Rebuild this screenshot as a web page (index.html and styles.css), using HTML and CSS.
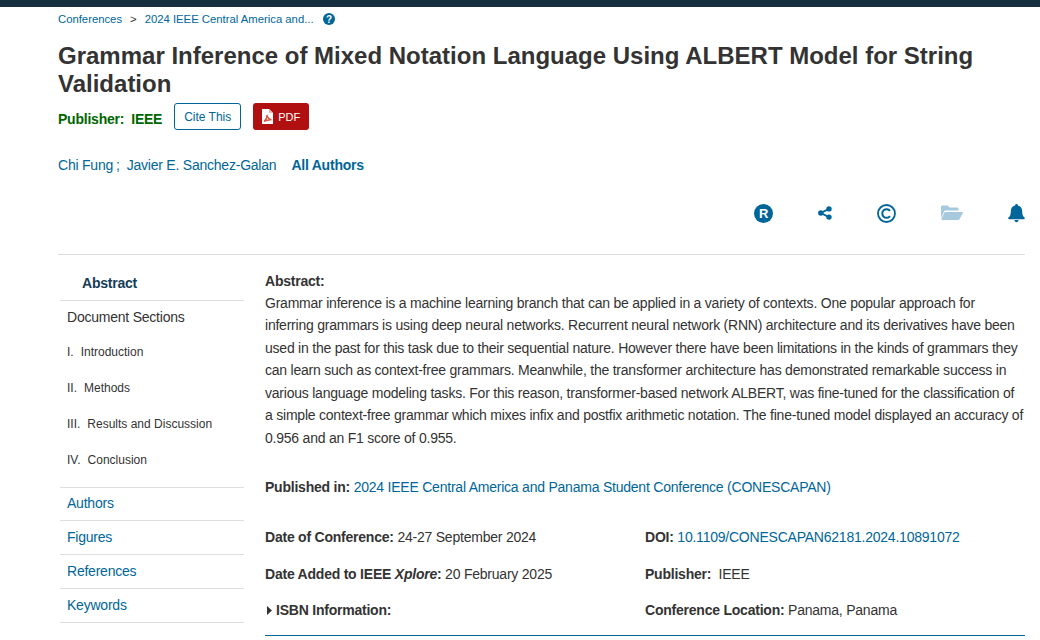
FILE: index.html
```html
<!DOCTYPE html>
<html lang="en">
<head>
<meta charset="utf-8">
<title>Grammar Inference of Mixed Notation Language Using ALBERT Model for String Validation</title>
<link rel="stylesheet" href="styles.css">
</head>
<body>
<div class="topbar"></div>
<main class="page">
  <nav class="crumbs">
    <a>Conferences</a><span class="sep">&gt;</span><a>2024 IEEE Central America and...</a>
    <svg class="help" viewBox="0 0 12 12" width="12" height="12"><circle cx="6" cy="6" r="6" fill="#006699"/><text x="6" y="9.6" text-anchor="middle" class="help-q">?</text></svg>
  </nav>
  <h1 class="title">Grammar Inference of Mixed Notation Language Using ALBERT Model for String Validation</h1>
  <div class="pubrow">
    <span class="publisher"><span>Publisher:</span><span>IEEE</span></span>
    <a class="cite">Cite This</a>
    <a class="pdf">
      <svg viewBox="0 0 11 15" width="11" height="15"><path d="M0 0H7L11 4V15H0Z" fill="#fff"/><path d="M7 0V4H11Z" fill="#e9b9b9"/><path d="M2 12.5C4 11 5 8.500 5 6C5.500 8.500 7 10.500 9.500 10.800C7 10.600 4 11.300 2 12.500Z" fill="none" stroke="#d8563f" stroke-width="1.300"/></svg>
      PDF
    </a>
  </div>
  <div class="authors">
    <a>Chi Fung</a><span class="semi">;</span><a>Javier E. Sanchez-Galan</a><a class="all">All Authors</a>
  </div>
  <div class="tools">
    <svg class="tool" viewBox="0 0 19 19" width="19" height="19"><circle cx="9.500" cy="9.500" r="9.500" fill="#006699"/><text x="9.700" y="14" text-anchor="middle" class="icon-r">R</text></svg>
    <svg class="tool" viewBox="0 0 14 14" width="14" height="14"><g fill="#006699"><circle cx="11" cy="2.900" r="2.700"/><circle cx="11" cy="11.100" r="2.700"/><circle cx="2.800" cy="7" r="2.700"/></g><path d="M11 2.900L2.800 7L11 11.100" fill="none" stroke="#006699" stroke-width="1.800"/></svg>
    <svg class="tool" viewBox="0 0 19 19" width="19" height="19"><circle cx="9.500" cy="9.500" r="8.500" fill="none" stroke="#006699" stroke-width="1.800"/><path d="M13 6.900A4.300 4.300 0 1 0 13 12.100" fill="none" stroke="#006699" stroke-width="2"/></svg>
    <svg class="tool" viewBox="0 0 22 16" width="22" height="16"><path d="M0 2C0 1 .7.500 1.500.500H6.500L8.500 2.500H16C17 2.500 17.500 3 17.500 4V5.500H5C4 5.500 3.300 6 3 6.800L0 13Z" fill="#a6c9de"/><path d="M4.300 7H21C21.800 7 22.200 7.600 21.800 8.300L18.500 14.300C18.200 14.800 17.700 15 17.200 15H1.200C.5 15 .2 14.400.5 13.800L3.300 7.700C3.500 7.200 3.800 7 4.300 7Z" fill="#a6c9de"/></svg>
    <svg class="tool" viewBox="0 0 18 20" width="17" height="19"><path d="M9 0C8 0 7.500.7 7.500 1.500C4.500 2.200 3 4.700 3 7.500C3 11.500 1.800 13 .5 14.300C0 14.800 0 16 1 16H17C18 16 18 14.800 17.500 14.300C16.200 13 15 11.500 15 7.500C15 4.700 13.500 2.200 10.500 1.500C10.500.7 10 0 9 0Z" fill="#006699"/><path d="M6.800 17H11.200C11.200 18.300 10.200 19.300 9 19.300C7.800 19.300 6.800 18.300 6.800 17Z" fill="#006699"/></svg>
  </div>
  <div class="content">
    <aside class="side">
      <div class="side-head">Abstract</div>
      <div class="sections">
        <div class="sections-title">Document Sections</div>
        <ul class="sec-list">
          <li><span>I.</span>Introduction</li>
          <li><span>II.</span>Methods</li>
          <li><span>III.</span>Results and Discussion</li>
          <li><span>IV.</span>Conclusion</li>
        </ul>
      </div>
      <a class="side-link">Authors</a>
      <a class="side-link">Figures</a>
      <a class="side-link">References</a>
      <a class="side-link">Keywords</a>
    </aside>
    <article class="body">
      <div class="abs-head">Abstract:</div>
      <p class="abs">Grammar inference is a machine learning branch that can be applied in a variety of contexts. One popular approach for inferring grammars is using deep neural networks. Recurrent neural network (RNN) architecture and its derivatives have been used in the past for this task due to their sequential nature. However there have been limitations in the kinds of grammars they can learn such as context-free grammars. Meanwhile, the transformer architecture has demonstrated remarkable success in various language modeling tasks. For this reason, transformer-based network ALBERT, was fine-tuned for the classification of a simple context-free grammar which mixes infix and postfix arithmetic notation. The fine-tuned model displayed an accuracy of 0.956 and an F1 score of 0.955.</p>
      <div class="published"><b>Published in:</b> <a>2024 IEEE Central America and Panama Student Conference (CONESCAPAN)</a></div>
      <div class="meta">
        <div class="meta-col">
          <div class="meta-item"><b>Date of Conference:</b> 24-27 September 2024</div>
          <div class="meta-item"><b>Date Added to IEEE <i>Xplore</i>:</b> 20 February 2025</div>
          <div class="meta-item isbn"><svg viewBox="0 0 5 9" width="5" height="9"><path d="M0 0L5 4.500L0 9Z" fill="#333"/></svg><b>ISBN Information:</b></div>
        </div>
        <div class="meta-col">
          <div class="meta-item"><b>DOI:</b> <a>10.1109/CONESCAPAN62181.2024.10891072</a></div>
          <div class="meta-item"><b>Publisher:</b>&nbsp; IEEE</div>
          <div class="meta-item"><b>Conference Location:</b> Panama, Panama</div>
        </div>
      </div>
      <div class="rule"></div>
    </article>
  </div>
</main>
</body>
</html>
```
FILE: styles.css
```css
* { box-sizing: border-box; }
html, body { margin: 0; padding: 0; height: 640px; overflow: hidden; background: #fff; }
body { font-family: "Liberation Sans", Arial, sans-serif; font-size: 14px; letter-spacing: -.225px; color: #333; }
a { color: #006699; }
.topbar { height: 7px; background: #152f3f; }
.page { margin-left: 58px; width: 970px; }
.crumbs { display: flex; align-items: center; height: 12px; margin-top: 6px; font-size: 11.300px; letter-spacing: 0; }
.sep { margin: 0 8px; color: #333; }
.help { margin-left: 9px; }
.help-q { font: bold 10px "Liberation Sans", sans-serif; fill: #fff; letter-spacing: 0; }
.icon-r { font: bold 13px "Liberation Sans", sans-serif; fill: #fff; letter-spacing: 0; }
.title { margin: 17px 0 0; font-size: 24px; line-height: 28px; font-weight: 700; letter-spacing: 0; color: #333; width: 960px; }
.pubrow { display: flex; align-items: center; margin-top: 5px; height: 27px; }
.publisher { display: flex; gap: 7px; font-weight: 700; color: #006600; margin-top: 4px; }
.cite { display: flex; align-items: center; justify-content: center; width: 67px; height: 27px; margin-left: 12px; border: 1px solid #006699; border-radius: 3px; font-size: 12px; letter-spacing: 0; background: #fff; }
.pdf { display: flex; align-items: center; gap: 5px; width: 56px; height: 27px; margin-left: 12px; padding-left: 9px; background: #b01010; border-radius: 3px; color: #fff; font-size: 11px; letter-spacing: 0; }
.authors { display: flex; margin-top: 27px; line-height: 16px; }
.semi { margin: 0 7px 0 3px; color: #006699; }
.all { margin-left: 15px; font-weight: 700; }
.tools { display: flex; align-items: center; justify-content: flex-end; gap: 45px; height: 20px; margin-top: 30px; width: 967px; }
.tool { flex: none; }
.content { display: grid; grid-template-columns: 186px 760px; column-gap: 21px; margin-top: 31px; border-top: 1px solid #ddd; width: 967px; padding-top: 17px; }
.side { padding-left: 2px; }
.side-head { padding-left: 22px; height: 29px; line-height: 22px; font-weight: 700; color: #153d5a; border-bottom: 1px solid #ddd; }
.sections { border-bottom: 1px solid #ddd; height: 187px; }
.sections-title { padding: 8px 0 0 7px; line-height: 16px; }
.sec-list { list-style: none; margin: 0; padding: 0 0 0 7px; font-size: 12px; letter-spacing: 0; }
.sec-list li { height: 36px; line-height: 36px; }
.sec-list li:first-child { margin-top: 9px; }
.sec-list span { margin-right: 7px; }
.side-link { display: block; height: 34px; line-height: 33px; padding-left: 7px; border-bottom: 1px solid #ddd; }
.sections + .side-link { height: 33px; line-height: 31px; }
.body { min-width: 0; }
.abs-head { font-weight: 700; line-height: 17px; margin-top: 1px; }
.abs { margin: 0; line-height: 22.500px; color: #333; padding-top: 1.500px; }
.published { margin-top: 26.500px; line-height: 22px; }
.meta { display: grid; grid-template-columns: 380px 380px; margin-top: 28px; }
.meta-item { height: 37px; line-height: 22px; }
.meta-item:nth-child(2) { height: 36px; }
.isbn { display: flex; align-items: flex-start; gap: 4px; }
.isbn svg { margin: 7px 0 0 2px; flex: none; }
.rule { border-top: 1px solid #006699; margin-top: -1px; }
```
